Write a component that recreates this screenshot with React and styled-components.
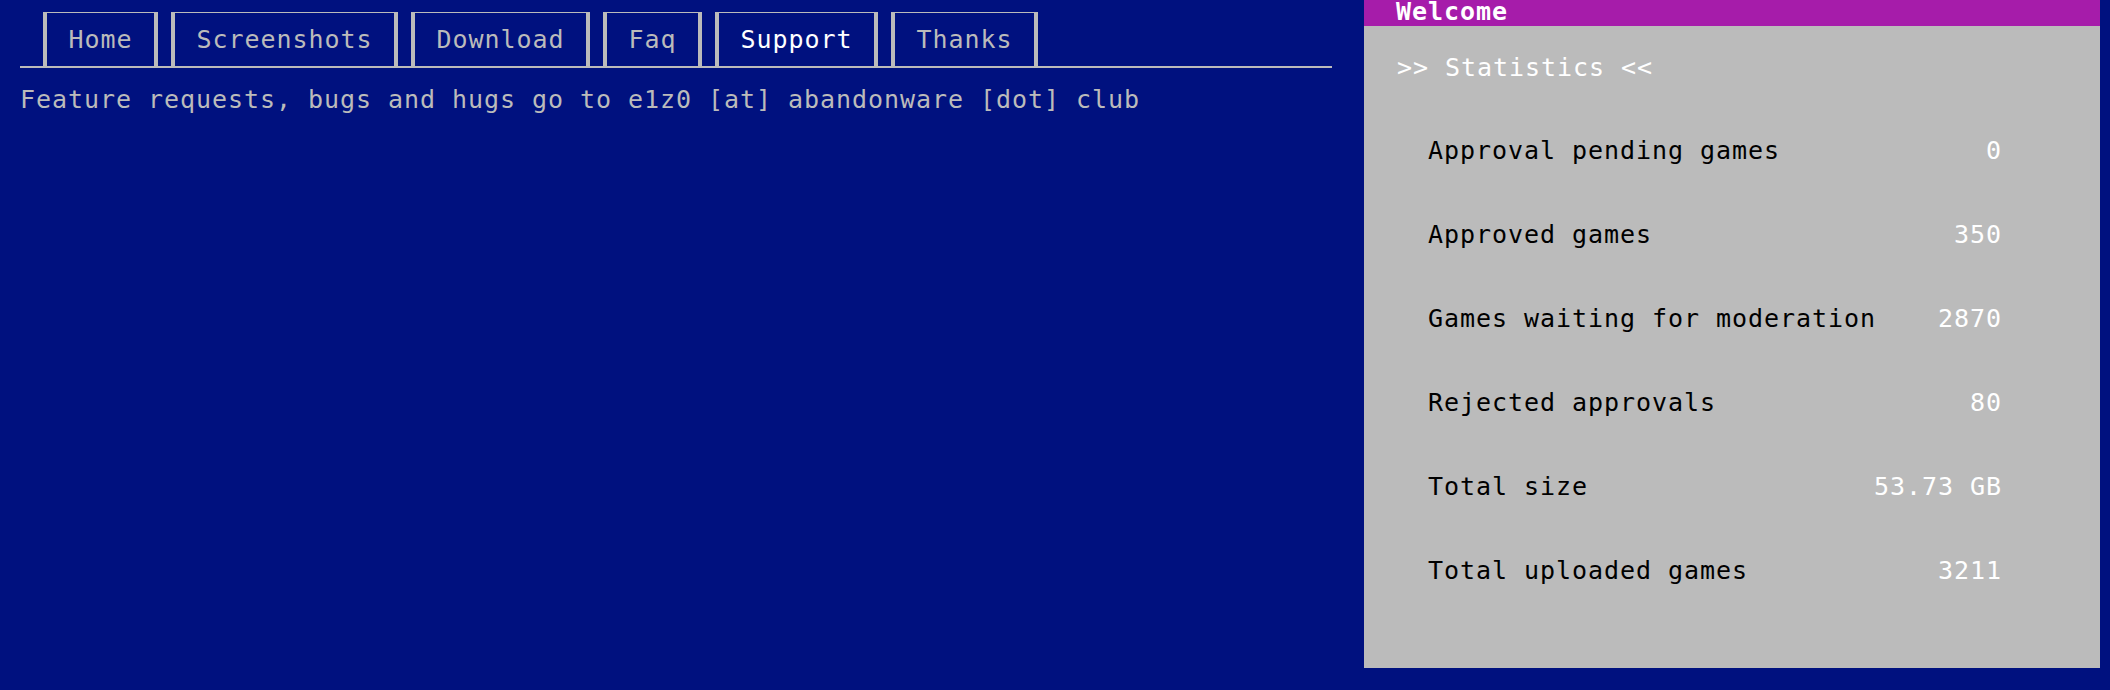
import React from "react";
import styled, { createGlobalStyle } from "styled-components";

const GlobalStyle = createGlobalStyle`
  html, body {
    margin: 0;
    padding: 0;
    background: #00117f;
  }
  body {
    font-family: "DejaVu Sans Mono", "Liberation Mono", monospace;
    font-size: 25px;
    letter-spacing: 0.95px;
    color: #bbbbbb;
  }
`;

const tabs = ["Home", "Screenshots", "Download", "Faq", "Support", "Thanks"];

const stats = [
  { label: "Approval pending games", value: "0" },
  { label: "Approved games", value: "350" },
  { label: "Games waiting for moderation", value: "2870" },
  { label: "Rejected approvals", value: "80" },
  { label: "Total size", value: "53.73 GB" },
  { label: "Total uploaded games", value: "3211" },
];

const App = () => {
  return (
    <>
      <GlobalStyle />
      <Page>
        <Main>
          <TabBar>
            {tabs.map((tab) => (
              <Tab key={tab} active={tab === "Support"}>
                {tab}
              </Tab>
            ))}
          </TabBar>
          <Notice>
            Feature requests, bugs and hugs go to e1z0 [at] abandonware [dot] club
          </Notice>
        </Main>
        <Sidebar>
          <SidebarTitle>Welcome</SidebarTitle>
          <SectionTitle>&gt;&gt; Statistics &lt;&lt;</SectionTitle>
          <StatsTable>
            {stats.map((stat) => (
              <StatRow key={stat.label}>
                <StatLabel>{stat.label}</StatLabel>
                <StatValue>{stat.value}</StatValue>
              </StatRow>
            ))}
          </StatsTable>
        </Sidebar>
      </Page>
    </>
  );
};

export default App;

const Page = styled.div`
  display: grid;
  grid-template-columns: 1fr 736px;
  column-gap: 32px;
  align-items: start;
  padding: 0 10px 0 20px;
  min-height: 690px;
  box-sizing: border-box;
`;

const Main = styled.div`
  display: flex;
  flex-direction: column;
`;

const TabBar = styled.div`
  display: flex;
  gap: 13px;
  padding: 12px 0 0 23px;
  border-bottom: 2px solid #bbbbbb;
`;

const Tab = styled.div`
  height: 54px;
  line-height: 53px;
  padding: 0 21.5px;
  box-sizing: border-box;
  border: 4px solid #bbbbbb;
  border-top-width: 1px;
  border-bottom: none;
  color: ${(props) => (props.active ? "#ffffff" : "#bbbbbb")};
  white-space: nowrap;
`;

const Notice = styled.div`
  margin-top: 16px;
  line-height: 32px;
  white-space: nowrap;
`;

const Sidebar = styled.div`
  background: #bbbbbb;
  display: flex;
  flex-direction: column;
  padding-bottom: 55px;
`;

const SidebarTitle = styled.div`
  background: #a61caa;
  color: #ffffff;
  font-weight: bold;
  height: 26px;
  line-height: 24px;
  padding-left: 32px;
`;

const SectionTitle = styled.div`
  color: #ffffff;
  line-height: 32px;
  margin-top: 26px;
  padding-left: 33px;
`;

const StatsTable = styled.div`
  display: flex;
  flex-direction: column;
  margin-top: 25px;
  padding: 0 98px 0 64px;
`;

const StatRow = styled.div`
  display: flex;
  justify-content: space-between;
  height: 84px;
  line-height: 84px;
`;

const StatLabel = styled.span`
  color: #000000;
`;

const StatValue = styled.span`
  color: #ffffff;
`;
